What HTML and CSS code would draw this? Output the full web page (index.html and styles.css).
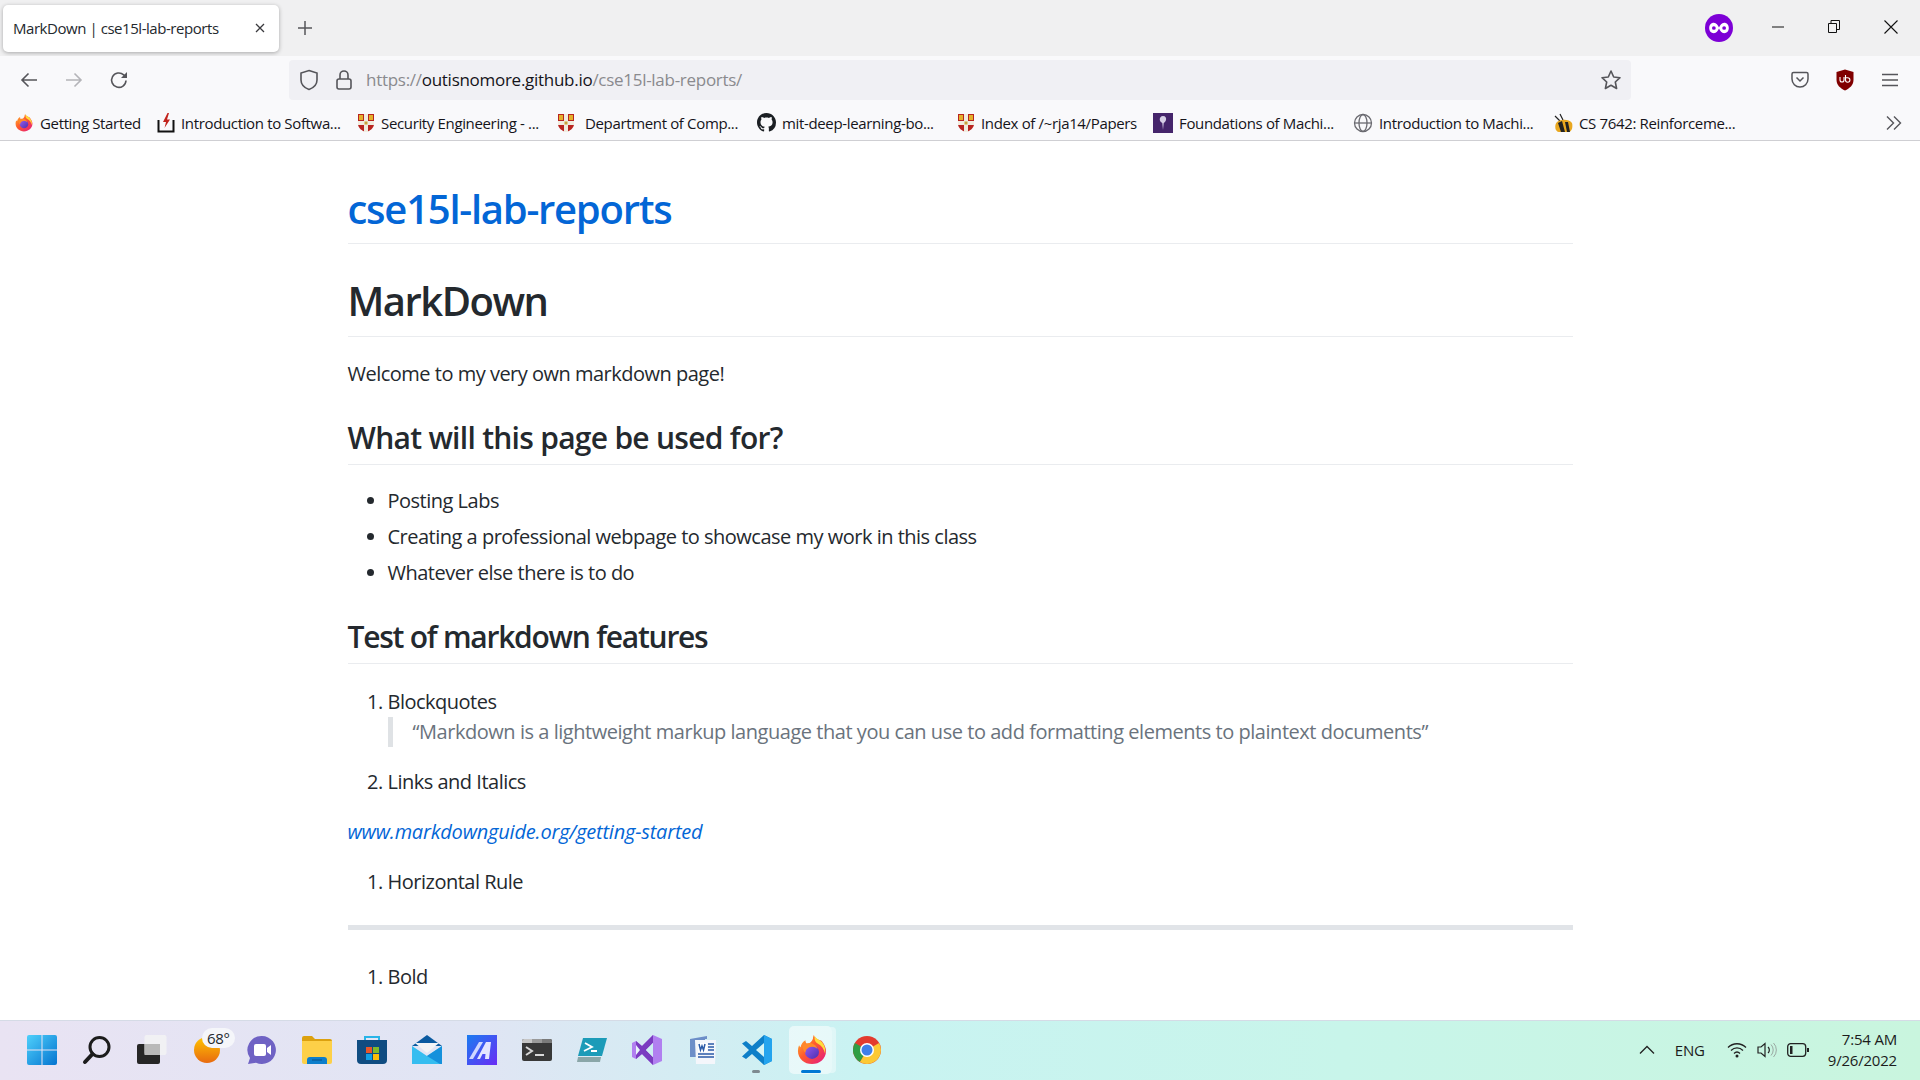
FILE: index.html
```html
<!DOCTYPE html>
<html>
<head>
  <meta charset="UTF-8">
  <title>MarkDown | cse15l-lab-reports</title>
  <link rel="stylesheet" href="styles.css">
</head>
<body>
  <svg class="defs" aria-hidden="true">
    <defs>
      <linearGradient id="fxBody" x1="0" y1="0" x2="1" y2="1">
        <stop offset="0" stop-color="#ffbd2e"/>
        <stop offset="0.45" stop-color="#ff5a2c"/>
        <stop offset="1" stop-color="#e31587"/>
      </linearGradient>
      <linearGradient id="fxCore" x1="0" y1="0" x2="1" y2="1">
        <stop offset="0" stop-color="#9a5cf0"/>
        <stop offset="1" stop-color="#4a2fb0"/>
      </linearGradient>
      <linearGradient id="winBlue" x1="0" y1="0" x2="1" y2="1">
        <stop offset="0" stop-color="#4fd0fb"/>
        <stop offset="1" stop-color="#0474d0"/>
      </linearGradient>
      <linearGradient id="sunFill" x1="0" y1="0" x2="0" y2="1">
        <stop offset="0" stop-color="#ffc400"/>
        <stop offset="1" stop-color="#e86a10"/>
      </linearGradient>
      <linearGradient id="azFill" x1="0" y1="0" x2="1" y2="1">
        <stop offset="0" stop-color="#1a7cf0"/>
        <stop offset="1" stop-color="#6a2cf5"/>
      </linearGradient>
      <symbol id="firefox" viewBox="0 0 32 32">
        <path d="M26 6c2 2 5 7 5 11 0 8-7 14-15 14S1 25 1 17c0-2 .4-4 1.200-6 .4 1 1 1.600 1.600 2 .4-3 2.400-6 5.200-7.500C9 8 10 9.500 12 10c2-2 4-3 5-6 0-1.500 .4-3 1-4 .6 3 3 4 5 5 1.200 .5 2.200 .5 3 1z" fill="url(#fxBody)"/>
        <path d="M19 1c1 3 5 4 7 6 3 3 5 8 4 13-1-5-4-9-8-11-2-1-4-4-3-8z" fill="#ffdd3c"/>
        <circle cx="16" cy="18" r="7.500" fill="url(#fxCore)"/>
        <path d="M6 12c2-3 6-4 10-3 3 1 5 3 6 6-3-3-6-3-9-2-2 1-4 3-4 6-2-2-3-4-3-7z" fill="#ff8a2a"/>
      </symbol>
      <symbol id="crest" viewBox="0 0 18 20">
        <path d="M1 1h16v10c0 4-4 7-8 8-4-1-8-4-8-8z" fill="#b8241f"/>
        <path d="M7 1h4v18H7zM1 8h16v4H1z" fill="#f0ece0"/>
        <path d="M2 2h4v5H2zM12 2h4v5h-4z" fill="#e3b02a"/>
        <path d="M7.500 8.500h3v3h-3z" fill="#c9a23a"/>
      </symbol>
    </defs>
  </svg>

  <div class="tabbar">
    <div class="tab">
      <span class="tab-title">MarkDown | cse15l-lab-reports</span>
      <svg class="tab-close" width="12" height="12" viewBox="0 0 12 12"><path d="M2 2l8 8M10 2l-8 8" stroke="#3a3a3e" stroke-width="1.300"/></svg>
    </div>
    <svg class="new-tab" width="16" height="16" viewBox="0 0 16 16"><path d="M8 1v14M1 8h14" stroke="#55555a" stroke-width="1.500"/></svg>
    <svg class="avatar" width="28" height="30" viewBox="0 0 30 30">
      <circle cx="15" cy="15" r="15" fill="#7d00d6"/>
      <path d="M9.500 9.500c2.800 0 4.200 2.500 5.500 5 1.300-2.500 2.700-5 5.500-5 3 0 5 2.400 5 5.500s-2 5.500-5 5.500c-2.800 0-4.200-2.500-5.500-5-1.300 2.500-2.700 5-5.500 5-3 0-5-2.400-5-5.500s2-5.500 5-5.500z" fill="#fff"/>
      <circle cx="9.500" cy="15" r="2" fill="#7d00d6"/>
      <circle cx="20.500" cy="15" r="2" fill="#7d00d6"/>
    </svg>
    <div class="win-btn">
      <svg width="12" height="12" viewBox="0 0 12 12"><path d="M0 6h12" stroke="#111" stroke-width="1"/></svg>
    </div>
    <div class="win-btn">
      <svg width="12" height="13" viewBox="0 0 12 13"><path d="M.5 3.500h8v9h-8zM3 3.500V.5h8.500v9H8.500" fill="none" stroke="#111" stroke-width="1"/></svg>
    </div>
    <div class="win-btn">
      <svg width="14" height="14" viewBox="0 0 14 14"><path d="M.5 .5l13 13M13.500 .5l-13 13" stroke="#111" stroke-width="1.100"/></svg>
    </div>
  </div>

  <div class="toolbar">
    <svg class="nav-btn" width="20" height="20" viewBox="0 0 20 20"><path d="M18 10H3M9.500 3.500L3 10l6.500 6.500" fill="none" stroke="#55555a" stroke-width="1.600"/></svg>
    <svg class="nav-btn" width="20" height="20" viewBox="0 0 20 20"><path d="M2 10h15M10.500 3.500L17 10l-6.500 6.500" fill="none" stroke="#b4b4b8" stroke-width="1.600"/></svg>
    <svg class="nav-btn" width="20" height="20" viewBox="0 0 20 20"><path d="M17 10.500a7.200 7.200 0 1 1-2.300-5.600L17.500 7.500" fill="none" stroke="#55555a" stroke-width="1.600"/><path d="M18 2v6h-6z" fill="#55555a"/></svg>
    <div class="urlbar">
      <svg class="url-shield" width="20" height="22" viewBox="0 0 20 22"><path d="M10 1.500l8 2.500v7c0 5-4 8-8 9.500-4-1.500-8-4.500-8-9.500V4z" fill="none" stroke="#55555a" stroke-width="1.600"/></svg>
      <svg class="url-lock" width="18" height="22" viewBox="0 0 18 22"><path d="M5 10V6a4 4 0 0 1 8 0v4" fill="none" stroke="#55555a" stroke-width="1.600"/><rect x="2" y="10" width="14" height="10" rx="2" fill="none" stroke="#55555a" stroke-width="1.600"/></svg>
      <span class="url-text">https://<b>outisnomore.github.io</b>/cse15l-lab-reports/</span>
      <svg class="url-star" width="22" height="22" viewBox="0 0 22 22"><path d="M11 2l2.700 6 6.300 .7-4.700 4.300 1.300 6.500L11 16.200 5.400 19.500 6.700 13 2 8.700 8.300 8z" fill="none" stroke="#55555a" stroke-width="1.600" stroke-linejoin="round"/></svg>
    </div>
    <svg class="ext ext-pocket" width="20" height="20" viewBox="0 0 20 20"><path d="M3.500 2.500h13a1.500 1.500 0 0 1 1.500 1.500v5a8 8 0 0 1-16 0V4a1.500 1.500 0 0 1 1.500-1.500z" fill="none" stroke="#55555a" stroke-width="1.500"/><path d="M6.500 7.500L10 11l3.500-3.500" fill="none" stroke="#55555a" stroke-width="1.500"/></svg>
    <svg class="ext ext-ublock" width="20" height="22" viewBox="0 0 20 22"><path d="M10 .5l8.500 2.500v8c0 5-4 8.500-8.500 10.500C5.500 19.500 1.500 16 1.500 11V3z" fill="#800000"/><path d="M5 8v3a2 2 0 0 0 4 0V8M10.500 6v5a2.200 2.200 0 1 0 2.200-2.200h-2" fill="none" stroke="#fff" stroke-width="1.100"/></svg>
    <svg class="ext ext-menu" width="16" height="14" viewBox="0 0 16 14"><path d="M0 1.500h16M0 7h16M0 12.500h16" stroke="#55555a" stroke-width="1.500"/></svg>
  </div>

  <div class="bookmarks">
    <div class="bm bm-first"><svg width="18" height="18"><use href="#firefox"/></svg><span>Getting Started</span></div>
    <div class="bm bm-wide">
      <svg width="18" height="20" viewBox="0 0 18 20"><path d="M1.500 7v11.500h15V7" fill="none" stroke="#111" stroke-width="2"/><path d="M10.500 0L6 9h3l-1.500 6L13 6.500h-3L12 0z" fill="#c2231c"/></svg>
      <span>Introduction to Softwa...</span>
    </div>
    <div class="bm bm-wide"><svg width="18" height="20"><use href="#crest"/></svg><span>Security Engineering - ...</span></div>
    <div class="bm bm-wide bm-gap"><svg width="18" height="20"><use href="#crest"/></svg><span>Department of Comp...</span></div>
    <div class="bm bm-wide">
      <svg width="19" height="19" viewBox="0 0 16 16"><path fill="#1b1f23" d="M8 0C3.580 0 0 3.580 0 8c0 3.540 2.290 6.530 5.470 7.590.4.070.55-.17.55-.38 0-.19-.01-.82-.01-1.490-2.010.37-2.530-.49-2.690-.94-.09-.23-.48-.94-.82-1.130-.28-.15-.68-.52-.01-.53.63-.01 1.080.58 1.230.82.720 1.210 1.870.87 2.330.66.070-.52.280-.87.510-1.070-1.780-.2-3.640-.89-3.640-3.950 0-.87.310-1.590.820-2.150-.08-.2-.36-1.020.08-2.120 0 0 .67-.21 2.200.82.640-.18 1.320-.27 2-.27s1.360.09 2 .27c1.530-1.040 2.200-.82 2.200-.82.440 1.100.160 1.920.080 2.120.510.560.820 1.270.820 2.150 0 3.070-1.870 3.750-3.650 3.950.290.250.540.730.540 1.480 0 1.070-.01 1.930-.01 2.200 0 .210.150.460.550.380A8.010 8.010 0 0 0 16 8c0-4.420-3.580-8-8-8z"/></svg>
      <span>mit-deep-learning-bo...</span>
    </div>
    <div class="bm bm-index"><svg width="18" height="20"><use href="#crest"/></svg><span>Index of /~rja14/Papers</span></div>
    <div class="bm bm-wide">
      <svg width="20" height="20" viewBox="0 0 20 20"><rect width="20" height="20" fill="#45256b"/><path d="M10 3c2.500 0 3.500 2 3 4-.4 1.500-1.500 2.500-2.300 3L10 17 9.300 10C8.500 9.500 7 8.500 6.800 7 6.500 5 7.800 3 10 3z" fill="#d6cfe6"/></svg>
      <span>Foundations of Machi...</span>
    </div>
    <div class="bm bm-wide">
      <svg width="20" height="20" viewBox="0 0 20 20"><g fill="none" stroke="#6a6a70" stroke-width="1.300"><circle cx="10" cy="10" r="8.500"/><ellipse cx="10" cy="10" rx="4" ry="8.500"/><path d="M1.500 10h17"/></g></svg>
      <span>Introduction to Machi...</span>
    </div>
    <div class="bm bm-wide">
      <svg width="20" height="20" viewBox="0 0 20 20"><path d="M2 3l5 5M7 1l3 6" stroke="#222" stroke-width="1.200"/><path d="M4 9c4-3 12-3 15 1 1 4 0 8-3 9H6C2 19 1 12 4 9z" fill="#e9a820"/><path d="M9 8l3 11h-4L5 10zM15 9l2 10h-3l-2-10z" fill="#222"/></svg>
      <span>CS 7642: Reinforceme...</span>
    </div>
    <svg class="bm-more" width="16" height="16" viewBox="0 0 16 16"><path d="M1 1.500L7.500 8 1 14.500M8 1.500L14.500 8 8 14.500" fill="none" stroke="#55555a" stroke-width="1.400"/></svg>
  </div>

  <main class="page">
    <div class="container">
      <header class="site-header">
        <a class="site-title" href="#">cse15l-lab-reports</a>
      </header>
      <h1>MarkDown</h1>
      <p class="intro">Welcome to my very own markdown page!</p>
      <h2 class="h2-first">What will this page be used for?</h2>
      <ul>
        <li>Posting Labs</li>
        <li>Creating a professional webpage to showcase my work in this class</li>
        <li>Whatever else there is to do</li>
      </ul>
      <h2 class="h2-tight">Test of markdown features</h2>
      <ol class="list-first">
        <li>Blockquotes
          <blockquote>“Markdown is a lightweight markup language that you can use to add formatting elements to plaintext documents”</blockquote>
        </li>
        <li>Links and Italics</li>
      </ol>
      <p><a href="#"><em>www.markdownguide.org/getting-started</em></a></p>
      <ol>
        <li>Horizontal Rule</li>
      </ol>
      <hr>
      <ol>
        <li>Bold</li>
      </ol>
      <svg class="clipped-line" width="1225" height="4" viewBox="0 0 1225 4">
        <path d="M38 0h3v4h-3zM107 0h2v4h-2zM186 0h3v4h-3zM294 0h2v4h-2zM371 0h2v4h-2zM388 0h2v4h-2zM414 0h2v4h-2zM496 0h2v4h-2zM539 0h3v4h-3zM583 0h2v4h-2z" fill="#24292e"/>
      </svg>
    </div>
  </main>

  <footer class="taskbar">
    <div class="task-item">
      <svg width="30" height="30" viewBox="0 0 30 30"><path d="M0 2a2 2 0 0 1 2-2h12.500v14.500H0zM15.500 0H28a2 2 0 0 1 2 2v12.500H15.500zM0 15.500h14.500V30H2a2 2 0 0 1-2-2zM15.500 15.500H30V28a2 2 0 0 1-2 2H15.500z" fill="url(#winBlue)"/></svg>
    </div>
    <div class="task-item">
      <svg width="30" height="30" viewBox="0 0 30 30"><circle cx="17.500" cy="12" r="9.500" fill="none" stroke="#1c1c1c" stroke-width="3"/><path d="M10.500 19L3 27" stroke="#1c1c1c" stroke-width="4" stroke-linecap="round"/></svg>
    </div>
    <div class="task-item">
      <svg width="30" height="30" viewBox="0 0 30 30"><rect x="0" y="9" width="23" height="20" rx="2" fill="#262626"/><rect x="7.500" y="0" width="22" height="20" rx="2" fill="#f4f4f4" fill-opacity="0.800"/><rect x="7.500" y="9" width="15.500" height="11" fill="#b9b9b9"/></svg>
    </div>
    <div class="task-item weather">
      <svg width="26" height="26" viewBox="0 0 26 26"><circle cx="13" cy="13" r="13" fill="url(#sunFill)"/></svg>
      <span class="weather-badge">68°</span>
    </div>
    <div class="task-item">
      <svg width="30" height="30" viewBox="0 0 30 30"><path d="M15 1a14 14 0 1 1-6 26.700L1 29l2-6A14 14 0 0 1 15 1z" fill="#6f62c4"/><rect x="7" y="9" width="12" height="12" rx="2" fill="#fff"/><path d="M20 13l4-3v10l-4-3z" fill="#fff"/></svg>
    </div>
    <div class="task-item">
      <svg width="30" height="28" viewBox="0 0 30 28"><path d="M0 2a2 2 0 0 1 2-2h8l3 3h15a2 2 0 0 1 2 2v4H0z" fill="#dca10f"/><path d="M0 5h30v21a2 2 0 0 1-2 2H2a2 2 0 0 1-2-2z" fill="#fdd048"/><path d="M5 24a3 3 0 0 1 3-3h14a3 3 0 0 1 3 3v4H5z" fill="#0d7ecb"/><path d="M10 24h10" stroke="#0a4f85" stroke-width="1"/></svg>
    </div>
    <div class="task-item">
      <svg width="30" height="30" viewBox="0 0 30 30"><path d="M8 6V2h14v4" fill="none" stroke="#28b4e8" stroke-width="2"/><path d="M0 5h30v20a4 4 0 0 1-4 4H4a4 4 0 0 1-4-4z" fill="#0f4c81"/><path d="M9 12h6v6H9z" fill="#e8562a"/><path d="M16 12h6v6h-6z" fill="#7fba2a"/><path d="M9 19h6v6H9z" fill="#0ea0e6"/><path d="M16 19h6v6h-6z" fill="#fbbc09"/></svg>
    </div>
    <div class="task-item">
      <svg width="30" height="29" viewBox="0 0 30 29"><path d="M15 0l15 11H0z" fill="#0a5aa0"/><path d="M3 8h24l-12 10z" fill="#f2f4f6"/><path d="M0 11l15 10 15-10v18H0z" fill="#35bdf0"/><path d="M15 21l15-10v18H28z" fill="#1591dc"/></svg>
    </div>
    <div class="task-item">
      <svg width="30" height="30" viewBox="0 0 30 30"><rect width="30" height="30" fill="url(#azFill)"/><path d="M10 24L19 7h5l-2 17h-4l.5-5h-3l-2.500 5z" fill="#e4e4ff"/><path d="M2 24L12 7h4L6 24z" fill="#cfd6ff"/></svg>
    </div>
    <div class="task-item">
      <svg width="30" height="22" viewBox="0 0 30 22"><rect width="30" height="22" rx="2" fill="#383838"/><path d="M0 2a2 2 0 0 1 2-2h8v4H0z" fill="#c6c6c6"/><path d="M10 0h10v4H10z" fill="#9a9a9a"/><path d="M20 0h8a2 2 0 0 1 2 2v2H20z" fill="#7a7a7a"/><path d="M4 8l6 4-6 4" fill="none" stroke="#d8d8d8" stroke-width="2"/><path d="M13 16h9" stroke="#d8d8d8" stroke-width="2"/></svg>
    </div>
    <div class="task-item">
      <svg width="30" height="24" viewBox="0 0 30 24"><path d="M6 0h24l-5 18H1z" fill="#1c9bb8"/><path d="M1 19h23l-1 5H0z" fill="#8aa6a8"/><path d="M8 5l7 4-8 4M14 13h6" fill="none" stroke="#fff" stroke-width="1.800"/></svg>
    </div>
    <div class="task-item">
      <svg width="30" height="30" viewBox="0 0 30 30"><path d="M21 0l9 4v22l-9 4-11-11-6 5-4-2V8l4-2 6 5z" fill="#b180f0"/><path d="M21 0v30L10 19l-6 5V6l6 5z" fill="#7a3cc0"/><path d="M21 8v14l-7-7zM4 10v10l4-5z" fill="#e9f6fa"/><path d="M21 8v14l-7-7z" fill="#cdeef2"/></svg>
    </div>
    <div class="task-item">
      <svg width="30" height="30" viewBox="0 0 30 30"><path d="M3 4l17-3v3h-2V22H3z" fill="#6c8ec8"/><path d="M8 5h21l-1 24H9z" fill="#f4f6fb"/><path d="M11 8h9v9h-9z" fill="#fff"/><path d="M12 9l1.500 6 1.500-4 1.500 4L18 9" fill="none" stroke="#2a5aa8" stroke-width="1.500"/><path d="M21 9h6M21 12h6M21 15h6M11 19h16M11 22h16" stroke="#2a5aa8" stroke-width="1.500"/></svg>
    </div>
    <div class="task-item vscode">
      <svg width="30" height="30" viewBox="0 0 30 30"><path d="M22 0l8 4v22l-8 4-12-11-6 5-4-2.500 7-6.500-7-6.500L4 6l6 5z" fill="#0e7fc8"/><path d="M22 0l8 4v22l-8 4z" fill="#24a4ee"/><path d="M22 8v14l-8-7z" fill="#d4f4f6"/></svg>
    </div>
    <div class="task-item active">
      <svg width="30" height="30"><use href="#firefox"/></svg>
    </div>
    <div class="task-item">
      <svg width="28" height="28" viewBox="0 0 28 28"><circle cx="14" cy="14" r="14" fill="#e33b2e"/><path d="M14 14L26.100 7A14 14 0 0 1 14 28z" fill="#fcc934"/><path d="M14 14l-7 12.100A14 14 0 0 1 1.900 7z" fill="#2f9e44"/><path d="M14 14l7 0-7 14a14 14 0 0 1-7-1.900z" fill="#fcc934"/><circle cx="14" cy="14" r="7" fill="#fff"/><circle cx="14" cy="14" r="5.500" fill="#3f7fe8"/></svg>
    </div>

    <div class="tray">
      <svg class="tray-chev" width="16" height="10" viewBox="0 0 16 10"><path d="M1 8.500L8 1.500l7 7" fill="none" stroke="#222" stroke-width="1.300"/></svg>
      <span class="tray-lang">ENG</span>
      <svg width="20" height="16" viewBox="0 0 20 16"><path d="M1 5.500c5-5 13-5 18 0M4 8.500c3.500-3.500 8.500-3.500 12 0M7 11.500c1.800-1.800 4.200-1.800 6 0" fill="none" stroke="#222" stroke-width="1.300"/><circle cx="10" cy="14" r="1.500" fill="#222"/></svg>
      <svg width="20" height="16" viewBox="0 0 20 16"><path d="M1 5h3l4-3.500v13L4 11H1z" fill="none" stroke="#222" stroke-width="1.200"/><path d="M11 5a4 4 0 0 1 0 6" fill="none" stroke="#222" stroke-width="1.200"/><path d="M14 2.500a8 8 0 0 1 0 11M16.500 1a10 10 0 0 1 0 14" fill="none" stroke="#9aa8a2" stroke-width="1"/></svg>
      <svg width="22" height="14" viewBox="0 0 22 14"><rect x=".7" y=".7" width="18" height="12.600" rx="3" fill="none" stroke="#222" stroke-width="1.300"/><rect x="3" y="3" width="2.500" height="8" fill="#222"/><path d="M20 5h2v4h-2z" fill="#222"/></svg>
      <div class="clock"><span>7:54 AM</span><span>9/26/2022</span></div>
    </div>
  </footer>
</body>
</html>
```

FILE: styles.css
```css
* {
  box-sizing: border-box;
}
html, body {
  height: 100%;
}
body {
  margin: 0;
  display: flex;
  flex-direction: column;
  overflow: hidden;
  background-color: #fff;
  color: #24292e;
  font-family: "Open Sans", "Noto Sans", sans-serif;
}
.defs {
  position: absolute;
  width: 0;
  height: 0;
}
svg {
  flex: none;
  display: block;
}

/* browser chrome */
.tabbar {
  height: 56px;
  flex: none;
  display: flex;
  align-items: center;
  background-color: #f0f0f1;
}
.tab {
  width: 276px;
  height: 47px;
  margin-left: 3px;
  padding: 0 10px;
  display: flex;
  align-items: center;
  justify-content: space-between;
  background-color: #fff;
  border-radius: 5px;
  box-shadow: 0 1px 4px rgba(0, 0, 0, 0.3);
  font-size: 15px;
  letter-spacing: -0.45px;
}
.tab-close {
  margin-right: 3px;
}
.new-tab {
  margin-left: 18px;
}
.avatar {
  margin: 0 17px 0 auto;
}
.win-btn {
  width: 56px;
  height: 48px;
  margin-bottom: 3px;
  display: flex;
  align-items: center;
  justify-content: center;
}
.win-btn:last-child {
  width: 57px;
  margin-right: 1px;
}
.toolbar {
  height: 47px;
  flex: none;
  padding-left: 19px;
  display: flex;
  align-items: center;
  background-color: #f9f9fb;
}
.nav-btn {
  margin-right: 25px;
}
.urlbar {
  width: 1342px;
  height: 40px;
  margin-left: 135px;
  padding: 0 9px 0 10px;
  display: flex;
  align-items: center;
  background-color: #f0f0f4;
  border-radius: 4px;
  font-size: 17px;
  color: #8a8a8e;
}
.url-shield {
  margin-right: 16px;
}
.url-lock {
  margin-right: 13px;
}
.url-text {
  flex: 1;
  letter-spacing: -0.28px;
}
.url-text b {
  font-weight: 400;
  color: #15141a;
}
.ext-pocket {
  margin-left: 159px;
}
.ext-ublock {
  margin-left: 25px;
}
.ext-menu {
  margin-left: 27px;
}
.bookmarks {
  height: 38px;
  flex: none;
  padding: 2px 0 0 15px;
  display: flex;
  align-items: center;
  background-color: #f9f9fb;
  border-bottom: 1px solid #cfcfd3;
  font-size: 15px;
  letter-spacing: -0.35px;
  color: #15141a;
}
.bm {
  display: flex;
  align-items: center;
  gap: 6px;
  white-space: nowrap;
}
.bm-first {
  width: 142px;
  gap: 7px;
}
.bm-wide {
  width: 200px;
}
.bm-gap {
  gap: 10px;
}
.bm-index {
  width: 196px;
  gap: 6px;
}
.bm-more {
  margin-left: auto;
  margin-right: 18px;
}

/* page */
.page {
  flex: 1;
  min-height: 0;
  overflow: hidden;
}
.container {
  width: 1225px;
  margin: 0 auto;
  padding-top: 43px;
  font-size: 20px;
  line-height: 1.5;
  letter-spacing: -0.5px;
}
.site-header {
  padding-bottom: 9px;
  border-bottom: 1px solid #eaecef;
}
.site-title {
  display: block;
  font-size: 40px;
  line-height: 50px;
  font-weight: 600;
  letter-spacing: -1.25px;
}
a {
  color: #0366d6;
  text-decoration: none;
}
em {
  letter-spacing: -0.2px;
}
h1, h2 {
  margin: 30px 0 20px;
  font-weight: 600;
  line-height: 1.25;
  border-bottom: 1px solid #eaecef;
}
h1 {
  padding: 2px 0 10px;
  font-size: 40px;
  letter-spacing: -1.5px;
}
h2 {
  padding: 1.500px 0 7.500px;
  font-size: 30px;
  letter-spacing: -0.72px;
}
.h2-first {
  margin-top: 28px;
}
.h2-tight {
  margin-top: 29px;
  letter-spacing: -1.25px;
}
p {
  margin: 0 0 20px;
}
.intro {
  padding-top: 2px;
}
ul, ol {
  margin: 0 0 20px;
  padding-left: 40px;
}
ul {
  padding-top: 1px;
}
.list-first {
  padding-top: 3px;
}
li + li {
  margin-top: 6px;
}
blockquote {
  margin: 0 0 20px;
  padding: 0 20px;
  border-left: 5px solid #dfe2e5;
  color: #6a737d;
  letter-spacing: -0.46px;
}
hr {
  height: 5px;
  margin: 28px 0 32px;
  padding: 0;
  border: 0;
  background-color: #e1e4e8;
}
.clipped-line {
  margin-top: 28px;
}

/* taskbar */
.taskbar {
  height: 60px;
  flex: none;
  padding: 0 0 2px 14px;
  display: flex;
  align-items: center;
  background: linear-gradient(90deg, #e9e3f3 0%, #e0e5f4 25%, #c9f3f2 45%, #c8f5ea 70%, #c9f5de 100%);
  border-top: 1px solid #d5dbe6;
}
.task-item {
  position: relative;
  width: 55px;
  height: 48px;
  display: flex;
  align-items: center;
  justify-content: center;
}
.weather-badge {
  position: absolute;
  top: 2px;
  left: 23px;
  padding: 0 5px;
  background-color: #f5f6fa;
  border-radius: 10px;
  font-size: 15px;
  line-height: 20px;
  letter-spacing: -0.3px;
}
.vscode::after {
  content: "";
  position: absolute;
  left: 23px;
  bottom: 1px;
  width: 8px;
  height: 3px;
  border-radius: 2px;
  background-color: #7d8a90;
}
.active::before {
  content: "";
  position: absolute;
  top: 0;
  bottom: 0;
  left: 5px;
  width: 43px;
  background-color: rgba(255, 255, 255, 0.55);
  border-radius: 5px;
  box-shadow: 5px 0 0 -1px rgba(255, 255, 255, 0.4);
}
.active svg {
  position: relative;
}
.active::after {
  content: "";
  position: absolute;
  left: 17px;
  bottom: 1px;
  width: 20px;
  height: 3px;
  border-radius: 2px;
  background-color: #0078d4;
}
.tray {
  margin-left: auto;
  padding-right: 23px;
  display: flex;
  align-items: center;
  gap: 10px;
  font-size: 15px;
  letter-spacing: -0.2px;
  color: #1c1c1c;
}
.tray-chev {
  margin-right: 10px;
}
.tray-lang {
  margin-right: 12px;
}
.clock {
  margin-left: 9px;
  display: flex;
  flex-direction: column;
  align-items: flex-end;
  line-height: 21px;
}
```
